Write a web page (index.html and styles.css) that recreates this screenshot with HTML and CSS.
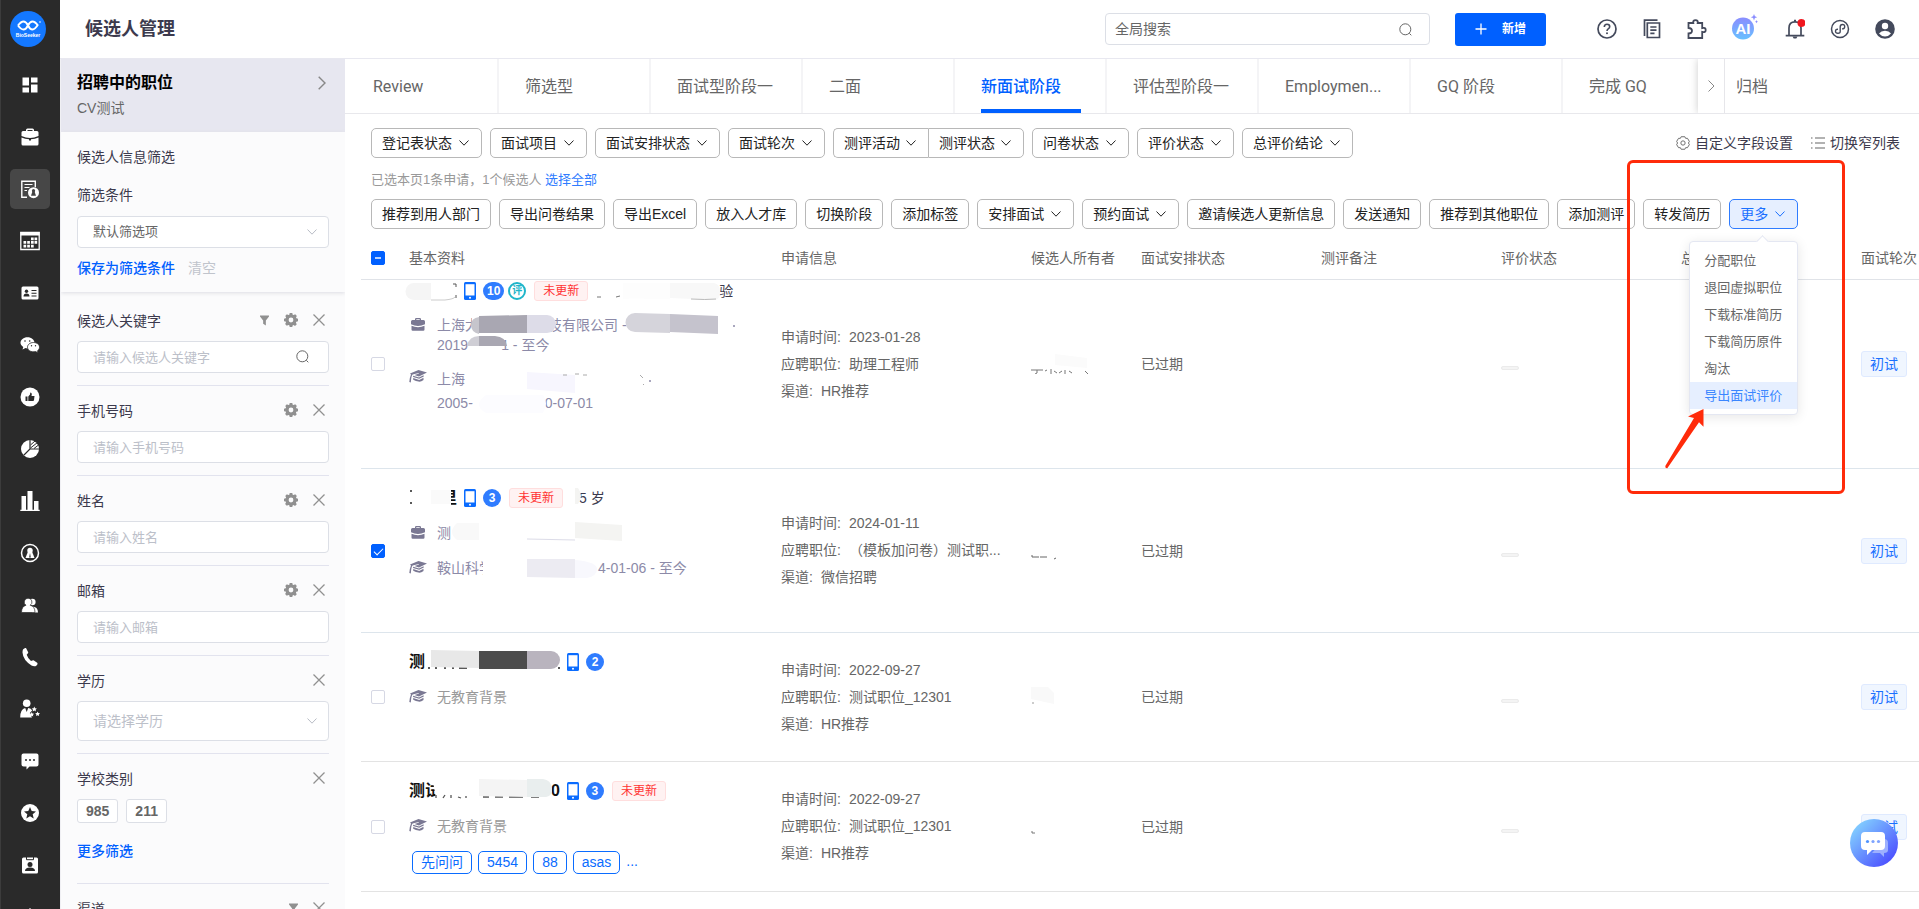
FILE: index.html
```html
<!DOCTYPE html>
<html lang="zh-CN">
<head>
<meta charset="utf-8">
<title>候选人管理</title>
<link rel="stylesheet" href="styles.css">
</head>
<body>
<svg class="defs" aria-hidden="true">
  <symbol id="down" viewBox="0 0 10 6"><path d="M.5.5 5 5.2 9.5.5" fill="none" stroke="currentColor"/></symbol>
  <symbol id="close" viewBox="0 0 12 12"><path d="m.5.5 11 11m0-11-11 11" fill="none" stroke="currentColor" stroke-width="1.3"/></symbol>
  <symbol id="gear" viewBox="0 0 14 14"><path fill="currentColor" fill-rule="evenodd" d="M5.7 0h2.6l.4 1.7 1 .4L11.200 1.200 12.900 2.900 12 4.300l.4 1 1.600.4v2.600l-1.700.4-.4 1 .9 1.500-1.800 1.700-1.400-.9-1 .4L8.300 14H5.700l-.4-1.700-1-.4-1.500.9-1.700-1.700.9-1.500-.4-1L0 8.300V5.700l1.700-.4.4-1-.9-1.400 1.700-1.700 1.400.9 1-.4zM7 4.600a2.400 2.400 0 1 0 0 4.800 2.400 2.400 0 0 0 0-4.800z"/></symbol>
  <symbol id="funnel" viewBox="0 0 10 11"><path fill="currentColor" d="M0 0h10v1L6.500 5.500V11L3.500 9V5.500L0 1z"/></symbol>
  <symbol id="search" viewBox="0 0 13 13"><circle cx="6.300" cy="6.300" r="5.500" fill="none" stroke="currentColor"/><path d="m10.300 10.300 2 2" stroke="currentColor"/></symbol>
  <symbol id="phone" viewBox="0 0 12 18"><rect width="12" height="18" rx="1.500" fill="#0a6cff"/><path fill="#fff" d="M1.500 2.200h9v11.300h-9z"/><circle cx="6" cy="15.700" r="1" fill="#fff"/></symbol>
  <symbol id="bag" viewBox="0 0 14 13"><path fill="currentColor" d="M4 2V1.200Q4 0 5.200 0h3.600Q10 0 10 1.200V2h2.500Q14 2 14 3.500v2.700Q10.500 8 7 8T0 6.200V3.500Q0 2 1.500 2zm1.300 0h3.400v-.8H5.300zM.5 7.800Q3.500 9.200 7 9.200t6.500-1.400V11.500q0 1.200-1.200 1.200H1.700Q.5 12.700.5 11.500z"/></symbol>
  <symbol id="cap" viewBox="0 0 18 13"><path fill="currentColor" d="M1 3.500 9.500 0 18 2.500 10 6.500 5.500 5 10 3.400 9.700 2.900 3.600 4.600Q2.200 6 1.800 12.500L.3 12Q.8 7 2 4.500zM4.200 5.700 10 7.600l4.500-2.300.3 1.200-4.600 2.300L4 7zM4.200 8l6 1.900 4.300-2.100v2.300Q12 12 9.500 11.600T4.200 9.700z"/></symbol>
  <linearGradient id="aiFill" x1="0" y1="0" x2="0" y2="1"><stop offset="0" stop-color="#8a8dff"/><stop offset="1" stop-color="#68c0ff"/></linearGradient>
  <linearGradient id="chatFill" x1="0" y1="0" x2="1" y2="1"><stop offset=".1" stop-color="#84d2ff"/><stop offset=".9" stop-color="#4a4cff"/></linearGradient>
</svg>

<div class="app">
  <nav class="rail" aria-label="主导航">
    <svg class="logo" viewBox="0 0 36 36"><circle cx="18" cy="18" r="18" fill="#1478ff"/><path d="M8 14.500Q11 10.500 13.500 10.500T18 14.500 22.500 18.500 28 13.500M8 14.500Q11 18.500 13.500 18.500T18 14.500 22.500 10.500 28 14.500" fill="none" stroke="#fff" stroke-width="1.900"/><circle cx="30" cy="11" r=".8" fill="#fff"/><text x="18" y="26" text-anchor="middle" class="logo-text">BioSeeker</text></svg>
    <a href="#" aria-label="概览"><svg viewBox="0 0 20 20" fill="#fff"><path d="M2.500 2.500h6.500v8H2.500zM2.500 12.500h6.500v5H2.500zM11 2.500h6.500v5H11zM11 9.500h6.500v8H11z"/></svg></a>
    <a href="#" aria-label="职位"><svg viewBox="0 0 20 20" fill="#fff"><path d="M6 4V3q0-1.500 1.500-1.500h5Q14 1.500 14 3v1h3q1.500 0 1.500 1.500V9Q14 11 10 11T1.500 9V5.500Q1.500 4 3 4zm1.500 0h5V3h-5zM1.500 10.500Q5 12 9 12.300v1.200h2v-1.200q4-.3 7.500-1.800V17q0 1.500-1.500 1.500H3Q1.500 18.500 1.500 17z"/></svg></a>
    <a href="#" class="on" aria-label="候选人"><svg viewBox="0 0 20 20"><path d="M7 18.200H1.800V2.300h13.500v6" fill="none" stroke="#fff" stroke-width="1.400"/><path d="M4.500 5.500h8M4.500 8.500h5M4.500 11.500h2.500" stroke="#fff" stroke-width="1.200"/><circle cx="13.500" cy="13.700" r="5.500" fill="#fff"/><circle cx="13.500" cy="11.700" r="1.600" fill="#444"/><path d="M12.600 12h1.800l1.600 4.700h-5z" fill="#444"/></svg></a>
    <a href="#" aria-label="日历"><svg viewBox="0 0 20 20"><path d="M.8 1.500h18.400v17H.8z" fill="none" stroke="#fff" stroke-width="1.300"/><path d="M.5 1h19v3.500H.5zM11 6.500h2.700v2.700H11zM14.500 6.500h2.700v2.700h-2.700zM3.500 10h2.700v2.700H3.500zM7.200 10h2.700v2.700H7.200zM11 10h2.700v2.700H11zM14.500 10h2.700v2.700h-2.700zM3.500 13.700h2.700v2.700H3.500zM7.200 13.700h2.700v2.700H7.200zM11 13.700h2.700v2.700H11z" fill="#fff"/></svg></a>
    <a href="#" aria-label="名片"><svg viewBox="0 0 20 20"><rect x="1.500" y="3.500" width="17" height="13" rx="1.500" fill="#fff"/><circle cx="6.500" cy="8.200" r="1.700" fill="#2a2a2a"/><path d="M3.500 13.500q0-3 3-3t3 3zM11.500 7h5v1h-5zM11.500 9.700h5v1h-5zM11.500 12.400h5v1h-5z" fill="#2a2a2a"/></svg></a>
    <a href="#" aria-label="微信"><svg viewBox="0 0 20 20"><path d="M7.500 2.200c4 0 7 2.500 7 5.600s-3 5.600-7 5.600L5.500 13l-3 1.500.8-2.500C1.500 11 .5 9.500.5 7.800c0-3.100 3-5.600 7-5.600z" fill="#fff"/><path d="M13.500 7.500c3.500 0 6 2.100 6 4.700 0 1.500-.7 2.700-2 3.600l.7 2.200-2.500-1.400c-5 1-8.200-1.500-8.200-4.400 0-2.600 2.500-4.700 6-4.700z" fill="#fff" stroke="#2a2a2a" stroke-width=".8"/><g fill="#2a2a2a"><circle cx="5" cy="6" r=".8"/><circle cx="9.700" cy="6" r=".8"/><circle cx="11.500" cy="10.700" r=".7"/><circle cx="15.500" cy="10.700" r=".7"/></g></svg></a>
    <a href="#" aria-label="推荐"><svg viewBox="0 0 20 20"><circle cx="10" cy="10" r="9.500" fill="#fff"/><path d="M5.500 9.500h2V14h-2zM8.300 14V9.500L10 7.500 10.300 5.500q1.500 0 1.500 1.700L11.500 9h3L14 13.200q-.2.800-1 .8z" fill="#2a2a2a"/></svg></a>
    <a href="#" aria-label="分析"><svg viewBox="0 0 20 20"><circle cx="10" cy="10" r="9" fill="#fff"/><path d="M10 1v9L3.500 16.500M10 10h9" fill="none" stroke="#2a2a2a" stroke-width="1.200"/><path d="M10.500 6 15 2M10.500 9 17.500 3.500M14 9.500l4.500-3.500" stroke="#2a2a2a" stroke-width="1"/></svg></a>
    <a href="#" aria-label="报表"><svg viewBox="0 0 20 20" fill="#fff"><path d="M1.500 5h4.500v14H1.500zM7.500 0h5v19h-5zM14 10h4.500v9H14zM.3 18.800h19.400V20H.3z"/></svg></a>
    <a href="#" aria-label="人才"><svg viewBox="0 0 20 20"><circle cx="10" cy="10" r="8.500" fill="none" stroke="#fff" stroke-width="1.500"/><circle cx="10" cy="7.500" r="2.700" fill="#fff"/><path d="M8 8.500h4L14.500 15h-9z" fill="#fff"/><path d="m10 10 .8 4.500H9.200z" fill="#2a2a2a"/></svg></a>
    <a href="#" aria-label="团队"><svg viewBox="0 0 20 20" fill="#fff"><circle cx="12.300" cy="7" r="3.300"/><path d="M11 11.500q7-.5 7 6h-6z"/><path d="M8 3.200a3.800 3.800 0 0 1 2.200 7q4.800 1.200 4.800 7.300H1.500q0-6.100 4.500-7.300a3.800 3.800 0 0 1 2-7z" stroke="#2a2a2a" stroke-width=".7"/></svg></a>
    <a href="#" aria-label="电话"><svg viewBox="0 0 20 20" fill="#fff"><path d="M3 2.500Q4.500.5 6 1L8.300 5.500Q8 6.500 6.700 7.700q1.300 4 4.300 6.300 1.500-.8 2.500-.8l4 2.800q.5 1.500-1.500 3-2 .8-4.500-.5Q3 13 2.500 5.500 2.500 3.500 3 2.500z"/></svg></a>
    <a href="#" aria-label="面试官"><svg viewBox="0 0 20 20" fill="#fff"><circle cx="6.700" cy="4.300" r="3.800"/><path d="M.2 18.500q0-8.500 5-9.500l1.500 4 1.500-4q3 .4 4 2.600L9.800 14l2.200 4.500z"/><path d="m14.300 7.500.8 1.700 1.800.2-1.300 1.300.3 1.800-1.600-.9-1.600.9.300-1.800-1.300-1.300 1.800-.2zM11.700 13l.7 1.500 1.700.2-1.200 1.200.3 1.700-1.500-.8-1.500.8.300-1.700-1.200-1.200 1.700-.2zM17.600 12.500l.7 1.500 1.700.2-1.200 1.200.3 1.700-1.500-.8-1.500.8.300-1.700-1.200-1.200 1.700-.2z"/></svg></a>
    <a href="#" aria-label="消息"><svg viewBox="0 0 20 20"><path d="M3.500 2.500h13q2 0 2 2v9q0 2-2 2H9.500l-3 3v-3h-3q-2 0-2-2v-9q0-2 2-2z" fill="#fff"/><g fill="#2a2a2a"><circle cx="6" cy="9" r="1"/><circle cx="10" cy="9" r="1"/><circle cx="14" cy="9" r="1"/></g></svg></a>
    <a href="#" aria-label="收藏"><svg viewBox="0 0 20 20"><circle cx="10" cy="10" r="9" fill="#fff"/><path d="m10 4 1.700 4 4.300.4-3.300 2.800 1 4.300L10 13.200l-3.700 2.300 1-4.300L4 8.400 8.300 8z" fill="#2a2a2a"/></svg></a>
    <a href="#" aria-label="档案"><svg viewBox="0 0 20 20"><rect x="2" y="2.500" width="16" height="16" rx="1.500" fill="#fff"/><path d="M6.500 2h7v2.700h-7z" fill="#fff" stroke="#2a2a2a"/><circle cx="10" cy="9.500" r="2.500" fill="#2a2a2a"/><path d="M5 16q0-3.500 5-3.500t5 3.500z" fill="#2a2a2a"/></svg></a>
    <a href="#" aria-label="设置"><svg viewBox="0 0 20 20" fill="#fff"><path d="m10 1 9 9-9 9-9-9z"/></svg></a>
  </nav>

  <div class="page">
    <header class="top">
      <h1>候选人管理</h1>
      <label class="global-search"><input type="search" placeholder="全局搜索" aria-label="全局搜索"><svg width="13" height="13"><use href="#search"/></svg></label>
      <button class="primary" type="button"><svg width="12" height="12" viewBox="0 0 12 12"><path d="M6 .5v11M.5 6h11" stroke="#fff" stroke-width="1.300"/></svg>新增</button>
      <div class="top-icons">
        <button type="button" aria-label="帮助"><svg viewBox="0 0 20 20"><circle cx="10" cy="10" r="9" fill="none" stroke="#444a5c" stroke-width="1.700"/><path d="M7.300 8Q7.300 5.300 10 5.300T12.700 7.800Q12.700 9 11.200 9.900 10 10.700 10 12" fill="none" stroke="#444a5c" stroke-width="1.600"/><circle cx="10" cy="14.300" r="1" fill="#444a5c"/></svg></button>
        <button type="button" aria-label="文档"><svg viewBox="0 0 20 20" fill="none" stroke="#444a5c" stroke-width="1.700"><path d="M5.300 4h12.200v14.500H5.300zM2.500 17V1.200h13M8.300 8h6.200M8.300 11.200h6.200M8.300 14.400h4.200"/></svg></button>
        <button type="button" aria-label="插件"><svg viewBox="0 0 20 20" fill="none" stroke="#444a5c" stroke-width="1.800"><path d="M1.500 4h4.800q-.6-2.800 2.200-2.800T10.700 4h4.500v5q3.500-.8 3.500 2t-3.500 2v6H1.500v-4.500q3.500 0 3.500-2.700T1.500 9z"/></svg></button>
        <button type="button" class="ai" aria-label="AI"><svg viewBox="0 0 26 26"><circle cx="11" cy="14.500" r="11" fill="url(#aiFill)"/><text x="11" y="20" text-anchor="middle" class="ai-text">AI</text><path d="m22 0 .9 2.300 2.300.9-2.300.9L22 6.400l-.9-2.300-2.300-.9 2.300-.9zM24.500 6l.5 1.200 1 .5-1 .5-.5 1-.5-1-1-.5 1-.5z" fill="#8a8dff"/></svg></button>
        <button type="button" class="bell" aria-label="通知"><svg viewBox="0 0 20 20"><path d="M4 16.500V9Q4 2.800 10 2.800T16 9v7.500M.7 16.700h18.600" fill="none" stroke="#444a5c" stroke-width="1.700"/><path d="M9 .8h2v2H9zM7.500 17.500h5L11.300 19.500H8.700z" fill="#444a5c"/><circle cx="16.500" cy="4" r="4" fill="#f0161e"/></svg></button>
        <button type="button" aria-label="小程序"><svg viewBox="0 0 20 20" fill="none" stroke="#444a5c" stroke-width="1.500"><circle cx="10" cy="10" r="8.500"/><path d="M8 10.200Q5.500 10 5.500 12.200T8 14.300 10.200 12V8Q10.200 5.500 12.500 5.500T14.700 7.700 12 9.900" stroke-width="1.400"/></svg></button>
        <button type="button" aria-label="账户"><svg viewBox="0 0 20 20"><circle cx="10" cy="10" r="9.800" fill="#444a5c"/><circle cx="10" cy="7" r="3.200" fill="#fff"/><path d="M4 14.500Q6 11.800 10 11.800t6 2.700Q13.500 17.500 10 17.500T4 14.500z" fill="#fff"/></svg></button>
      </div>
    </header>

    <div class="body">
      <aside class="side">
        <a class="job" href="#">
          <span><strong>招聘中的职位</strong><small>CV测试</small></span>
          <svg width="8" height="14" viewBox="0 0 8 14"><path d="m.7.700 6.300 6.300-6.300 6.300" fill="none" stroke="#888" stroke-width="1.400"/></svg>
        </a>
        <div class="conditions">
          <h2>候选人信息筛选</h2>
          <label for="preset">筛选条件</label>
          <div class="pick"><select id="preset"><option>默认筛选项</option></select><svg width="10" height="6"><use href="#down"/></svg></div>
          <div class="links"><a href="#">保存为筛选条件</a><a class="muted" href="#">清空</a></div>
        </div>
        <form class="fields">
          <section><div class="field-head"><label for="kw">候选人关键字</label><svg width="9" height="11"><use href="#funnel"/></svg><svg width="14" height="14"><use href="#gear"/></svg><svg width="12" height="12"><use href="#close"/></svg></div>
            <div class="pick find"><input id="kw" type="text" placeholder="请输入候选人关键字"><svg width="13" height="13"><use href="#search"/></svg></div></section>
          <section><div class="field-head"><label for="mobile">手机号码</label><svg width="14" height="14"><use href="#gear"/></svg><svg width="12" height="12"><use href="#close"/></svg></div>
            <input id="mobile" type="text" placeholder="请输入手机号码"></section>
          <section><div class="field-head"><label for="name">姓名</label><svg width="14" height="14"><use href="#gear"/></svg><svg width="12" height="12"><use href="#close"/></svg></div>
            <input id="name" type="text" placeholder="请输入姓名"></section>
          <section><div class="field-head"><label for="mail">邮箱</label><svg width="14" height="14"><use href="#gear"/></svg><svg width="12" height="12"><use href="#close"/></svg></div>
            <input id="mail" type="text" placeholder="请输入邮箱"></section>
          <section><div class="field-head"><label for="degree">学历</label><svg width="12" height="12"><use href="#close"/></svg></div>
            <div class="pick"><select id="degree" class="tall"><option>请选择学历</option></select><svg width="10" height="6"><use href="#down"/></svg></div></section>
          <section><div class="field-head"><span>学校类别</span><svg width="12" height="12"><use href="#close"/></svg></div>
            <div class="chips"><button type="button">985</button><button type="button">211</button></div>
            <a class="more-filters" href="#">更多筛选</a></section>
          <section><div class="field-head"><span>渠道</span><svg width="9" height="11"><use href="#funnel"/></svg><svg width="12" height="12"><use href="#close"/></svg></div></section>
        </form>
      </aside>

      <main class="main">
        <nav class="tabs">
          <a href="#">Review</a><a href="#">筛选型</a><a href="#">面试型阶段一</a><a href="#">二面</a><a href="#" class="on"><span>新面试阶段</span></a><a href="#">评估型阶段一</a><a href="#">Employmen...</a><a href="#">GQ 阶段</a><a href="#">完成 GQ</a>
          <div class="tabs-end"><button type="button" aria-label="更多阶段"><svg width="7" height="12" viewBox="0 0 7 12"><path d="M.5.500 6 6 .5 11.500" fill="none" stroke="#888"/></svg></button><a href="#">归档</a></div>
        </nav>

        <div class="tools">
          <div class="row">
            <button type="button">登记表状态<svg width="10" height="6"><use href="#down"/></svg></button>
            <button type="button">面试项目<svg width="10" height="6"><use href="#down"/></svg></button>
            <button type="button">面试安排状态<svg width="10" height="6"><use href="#down"/></svg></button>
            <button type="button">面试轮次<svg width="10" height="6"><use href="#down"/></svg></button>
            <div class="joined"><button type="button">测评活动<svg width="10" height="6"><use href="#down"/></svg></button><button type="button">测评状态<svg width="10" height="6"><use href="#down"/></svg></button></div>
            <button type="button">问卷状态<svg width="10" height="6"><use href="#down"/></svg></button>
            <button type="button">评价状态<svg width="10" height="6"><use href="#down"/></svg></button>
            <button type="button">总评价结论<svg width="10" height="6"><use href="#down"/></svg></button>
            <div class="view-links">
              <a href="#"><svg width="14" height="14" viewBox="0 0 15 15" fill="none" stroke="#666"><path d="M5.500.800h4l.8 1.700h2l2 3.300-1 1.700 1 1.700-2 3.300h-2l-.8 1.700h-4l-.8-1.700h-2l-2-3.300 1-1.700-1-1.700 2-3.300h2z"/><circle cx="7.500" cy="7.500" r="2.300"/></svg>自定义字段设置</a>
              <a href="#"><svg width="14" height="12" viewBox="0 0 14 12" stroke="#666" stroke-width="1.200"><path d="M4 1h10M4 6h10M4 11h10M0 1h1.500M0 6h1.500M0 11h1.500"/></svg>切换窄列表</a>
            </div>
          </div>
          <p class="picked">已选本页1条申请，1个候选人 <a href="#">选择全部</a></p>
          <div class="row">
            <button type="button">推荐到用人部门</button>
            <button type="button">导出问卷结果</button>
            <button type="button">导出Excel</button>
            <button type="button">放入人才库</button>
            <button type="button">切换阶段</button>
            <button type="button">添加标签</button>
            <button type="button">安排面试<svg width="10" height="6"><use href="#down"/></svg></button>
            <button type="button">预约面试<svg width="10" height="6"><use href="#down"/></svg></button>
            <button type="button">邀请候选人更新信息</button>
            <button type="button">发送通知</button>
            <button type="button">推荐到其他职位</button>
            <button type="button">添加测评</button>
            <button type="button">转发简历</button>
            <div class="more">
              <button type="button" class="active">更多<svg width="10" height="6"><use href="#down"/></svg></button>
              <div class="menu">
                <a href="#">分配职位</a><a href="#">退回虚拟职位</a><a href="#">下载标准简历</a><a href="#">下载简历原件</a><a href="#">淘汰</a><a href="#" class="on">导出面试评价</a>
              </div>
              <div class="callout"><svg viewBox="0 0 39 60"><path d="M38.500 0 23 7.500l6 1.500L.3 57q-.3 2.500 2 2.300L34 13.300l4.500 4.500z" fill="#ff2b0a"/></svg></div>
            </div>
          </div>
        </div>

        <div class="list">
          <table>
            <colgroup><col class="c-check"><col class="c-profile"><col class="c-apply"><col class="c-owner"><col class="c-std"><col class="c-std"><col class="c-std"><col class="c-std"><col class="c-last"></colgroup>
            <thead><tr><th><input type="checkbox" class="part" aria-label="全选"></th><th class="profile">基本资料</th><th>申请信息</th><th>候选人所有者</th><th>面试安排状态</th><th>测评备注</th><th>评价状态</th><th>总评价结论</th><th>面试轮次</th></tr></thead>
            <tbody>
              <tr class="r1">
                <td><input type="checkbox" aria-label="选择候选人 1"></td>
                <td class="profile">
                  <div class="name"><i class="hid w-short"></i><svg width="12" height="18"><use href="#phone"/></svg><b class="count">10</b><span class="rated">评</span><em class="stale">未更新</em><i class="hid w-years"></i><span>验</span></div>
                  <div class="line"><svg width="14" height="13"><use href="#bag"/></svg><span>上海大<i class="hid w-firm"></i>技有限公司 -<br>2019<i class="hid w-date"></i>1 - 至今</span></div>
                  <div class="line school"><svg width="18" height="13"><use href="#cap"/></svg><span>上海<br>2005-<i class="hid w-span"></i>0-07-01</span></div>
                  <svg class="smudge" width="380" height="189">
                    <path d="M23 3h17v17H23a8 8 0 0 1 0-17z" fill="#f5f5f5"/><path d="M40 20h14q9-1 10-3" fill="none" stroke="#ccc"/><path d="M62 4h3v3M65 15v3" fill="none" stroke="#555"/>
                    <path d="M206 17h4M225 17l4-1" stroke="#777"/><path d="M232 3h47v16q-47-1-47 0z" fill="#fdfdfd"/><path d="M279 3h44q6 1 6 9 0 7-5 8l-45-2z" fill="#f8f8f8"/><path d="M300 19q15 1 25 0" fill="none" stroke="#bbb"/>
                    <path d="M81 34h7v20h-7z" fill="#fff"/><path d="M88 37v17q-8-2-8-9t8-8z" fill="#c6c5cc"/><path d="M88 36l48-1v18H88z" fill="#a9a7b2"/><path d="M136 35h20a9 9 0 0 1 0 18h-20z" fill="#dddce8"/>
                    <path d="M244 33l35 1v19l-35-1a9 9 0 0 1 0-19z" fill="#d5d4db"/><path d="m279 34 48 2v18l-48-2z" fill="#c5c3cd"/><circle cx="343" cy="46" r="1" fill="#8c8aa8"/>
                    <path d="M88 56q-10 0-12 10h12z" fill="#cfced5"/><path d="M88 56h16q11 1 12 10H88z" fill="#a9a7b2"/>
                    <path d="m136 92 48 3v18l-48-4z" fill="#f7f6fe"/><path d="M172 95h4M184 94h4M192 95h4M249 95l3 3M252 105l1-1" stroke="#aaa"/><circle cx="259" cy="101" r="1" fill="#8c8aa8"/>
                    <path d="M95 115h57q6 8 0 18H95q-14-8 0-18z" fill="#fcfcff"/>
                  </svg>
                </td>
                <td><p><span>申请时间:</span>2023-01-28</p><p><span>应聘职位:</span>助理工程师</p><p><span>渠道:</span>HR推荐</p></td>
                <td><svg class="scrap" width="68" height="20" viewBox="0 0 68 20"><path d="m24 0 32 4v10l-32-3z" fill="#fbfbfb"/><path d="M0 16h12M6 16v3l-2 1M14 17l2-1M20 15v5M23 17l3 2M28 19l3-2M34 16v4M38 17l3 2M54 17l3 3" fill="none" stroke="#777"/></svg></td>
                <td>已过期</td><td></td><td><i class="dash"></i></td><td></td><td><a class="round" href="#">初试</a></td>
              </tr>
              <tr class="r2">
                <td><input type="checkbox" checked aria-label="选择候选人 2"></td>
                <td class="profile">
                  <div class="name"><i class="hid w-first"></i><strong>里</strong><svg width="12" height="18"><use href="#phone"/></svg><b class="count">3</b><em class="stale">未更新</em><i class="hid w-age"></i><span>5 岁</span></div>
                  <div class="line"><svg width="14" height="13"><use href="#bag"/></svg><span>测</span></div>
                  <div class="line"><svg width="18" height="13"><use href="#cap"/></svg><span>鞍山科学<i class="hid w-school"></i>4-01-06 - 至今</span></div>
                  <svg class="smudge" width="380" height="164">
                    <path d="M18 20h42v18H18z" fill="#fff"/><path d="M40 21h20v14H40z" fill="#fafafa"/><path d="M19 22h2M19 34h2" stroke="#222" stroke-width="1.500"/>
                    <path d="M184 19h3q6 8 0 16h-3z" fill="#f4f4f2"/>
                    <path d="M66 54h22v17H66q-10-8 0-17z" fill="#f9f9f9"/><path d="m136 70 48 1" stroke="#dcdce8"/><path d="m184 53 47 3v16l-47-3z" fill="#f4f4f2"/>
                    <path d="M92 89h44v20H92z" fill="#fff"/><path d="M136 90h48v19l-48-1z" fill="#ecebf2"/><path d="M184 91q22 2 22 9t-10 9h-12z" fill="#f8f8fd"/>
                  </svg>
                </td>
                <td><p><span>申请时间:</span>2024-01-11</p><p><span>应聘职位:</span>（模板加问卷）测试职...</p><p><span>渠道:</span>微信招聘</p></td>
                <td><svg class="scrap" width="68" height="20" viewBox="0 0 68 20"><path d="M1 14v2h7M9 16h7M23 18l2-1" fill="none" stroke="#666"/></svg></td>
                <td>已过期</td><td></td><td><i class="dash"></i></td><td></td><td><a class="round" href="#">初试</a></td>
              </tr>
              <tr class="r3">
                <td><input type="checkbox" aria-label="选择候选人 3"></td>
                <td class="profile">
                  <div class="name"><strong>测</strong><i class="hid w-long"></i><svg width="12" height="18"><use href="#phone"/></svg><b class="count">2</b></div>
                  <div class="line none"><svg width="18" height="13"><use href="#cap"/></svg><span>无教育背景</span></div>
                  <svg class="smudge" width="380" height="129">
                    <path d="M38 34v2M45 34v2M54 33v3M62 34v2M68 35h8M167 35h2" stroke="#222" stroke-width="1.500"/>
                    <path d="m40 17 48 1v17l-48-1z" fill="#e8e8e8"/><path d="M88 18h48v18H88z" fill="#4d4d4d"/><path d="M136 18h24a9 9 0 0 1 0 18h-24z" fill="#b9b4be"/>
                  </svg>
                </td>
                <td><p><span>申请时间:</span>2022-09-27</p><p><span>应聘职位:</span>测试职位_12301</p><p><span>渠道:</span>HR推荐</p></td>
                <td><svg class="scrap" width="68" height="20" viewBox="0 0 68 20"><path d="M0 0h17l6 6v11L0 12z" fill="#f9f9f9"/><path d="M1 16h2" stroke="#999"/></svg></td>
                <td>已过期</td><td></td><td><i class="dash"></i></td><td></td><td><a class="round" href="#">初试</a></td>
              </tr>
              <tr class="r4">
                <td><input type="checkbox" aria-label="选择候选人 4"></td>
                <td class="profile">
                  <div class="name"><strong>测试</strong><i class="hid w-mid"></i><strong>0</strong><svg width="12" height="18"><use href="#phone"/></svg><b class="count">3</b><em class="stale">未更新</em></div>
                  <div class="line none"><svg width="18" height="13"><use href="#cap"/></svg><span>无教育背景</span></div>
                  <div class="labels"><a href="#">先问问</a><a href="#">5454</a><a href="#">88</a><a href="#">asas</a><span>...</span></div>
                  <svg class="smudge" width="380" height="130">
                    <path d="M42 20h12v16H45z" fill="#fff"/><path d="M45 33v3M54 33l-2 3M60 33v3M67 35l3 1M75 34v2M92 35h6M104 35h8M118 35h14M140 35h8" stroke="#555" stroke-width="1.300"/>
                    <path d="m88 17 48 1v17l-48-1z" fill="#f4f4f4"/><path d="M136 17h16q8 1 9 9t-6 9h-19z" fill="#e9eeee"/>
                  </svg>
                </td>
                <td><p><span>申请时间:</span>2022-09-27</p><p><span>应聘职位:</span>测试职位_12301</p><p><span>渠道:</span>HR推荐</p></td>
                <td><svg class="scrap" width="68" height="20" viewBox="0 0 68 20"><path d="M1 14v2h3" fill="none" stroke="#777"/></svg></td>
                <td>已过期</td><td></td><td><i class="dash"></i></td><td></td><td><a class="round" href="#">初试</a></td>
              </tr>
            </tbody>
          </table>
        </div>
      </main>
    </div>
  </div>
  <button class="chat" type="button" aria-label="在线客服"><svg viewBox="0 0 48 48"><circle cx="24" cy="24" r="24" fill="url(#chatFill)"/><path d="M34 20q4 0 4 4v7q0 3-4 3v4l-4-4h-8z" fill="#9db0ff"/><path d="M15 13h16q4 0 4 4v10q0 4-4 4h-9l-5 5v-5h-2q-4 0-4-4V17q0-4 4-4z" fill="#fff"/><circle cx="17.500" cy="22.500" r="1.600" fill="#4f93ff"/><circle cx="23" cy="22.500" r="1.600" fill="#7fa4ff"/><circle cx="28.500" cy="22.500" r="1.600" fill="#7fa4ff"/></svg></button>
</div>
</body>
</html>
```
FILE: styles.css
```css
* { box-sizing: border-box; }
body { margin: 0; font: 14px/20px "Liberation Sans", "Noto Sans CJK SC", sans-serif; color: #666; background: #fff; overflow: hidden; }
a { color: inherit; text-decoration: none; }
button, input, select { font: inherit; color: inherit; margin: 0; }
button { padding: 0; border: 0; background: none; }
h1, h2, p { margin: 0; font-weight: 400; }
svg { flex: none; display: block; }
.defs { position: absolute; width: 0; height: 0; }

.app { display: flex; height: 100vh; overflow: hidden; }
.rail { flex: none; width: 60px; padding: 11px 0 0 9px; display: flex; flex-direction: column; gap: 12px; background: #2a2a2a; border-left: 1px solid #3c3c3c; overflow: hidden; }
.logo { width: 36px; height: 36px; margin-bottom: 6px; }
.logo-text { font: bold 5px "Liberation Sans", sans-serif; fill: #fff; }
.rail a { flex: none; width: 40px; height: 40px; display: grid; place-items: center; border-radius: 5px; }
.rail a svg { width: 20px; height: 20px; }
.rail a.on { background: #474747; }

.page { flex: 1; min-width: 0; display: flex; flex-direction: column; }
.top { flex: none; height: 59px; padding: 0 24px 0 25px; display: flex; align-items: center; border-bottom: 1px solid #e8e8f0; }
.top h1 { font-size: 18px; font-weight: 700; color: #3c3a4d; margin-right: auto; }
.global-search { width: 325px; height: 32px; display: flex; align-items: center; padding: 0 17px 0 9px; border: 1px solid #dcdfe6; border-radius: 4px; }
.global-search input { flex: 1; min-width: 0; padding: 0; border: 0; outline: 0; appearance: none; background: none; }
.global-search input::placeholder { color: #666; opacity: 1; }
.primary { width: 91px; height: 33px; margin: 0 51px 0 25px; display: flex; align-items: center; justify-content: center; gap: 15px; border-radius: 3px; background: #0060ff; color: #fff; font-size: 12px; font-weight: 700; }
.top-icons { display: flex; align-items: center; gap: 25px; }
.top-icons svg { width: 20px; height: 20px; }
.top-icons .ai svg { width: 26px; height: 26px; }
.top-icons .ai { margin: 0 2px 4px 0; }
.ai-text { font: bold 15px "Liberation Sans", sans-serif; fill: #fff; }

.body { flex: 1; min-height: 0; display: flex; }
.side { flex: none; width: 285px; border-left: 1px solid #f0f0f4; background: #fbfbfc; color: #3c3a4d; overflow: hidden; }
.job { display: flex; justify-content: space-between; height: 73px; padding: 14px 19px 0 16px; background: #e7e7f0; }
.job strong, .job small { display: block; }
.job strong { font-size: 16px; color: #000; }
.job small { margin-top: 5px; font-size: 14px; color: #666; }
.job svg { margin-top: 3px; }
.conditions { padding: 15px 16px 14px; box-shadow: 0 1px 4px #dcdce2; }
.conditions h2 { font-size: 14px; margin-bottom: 18px; }
.conditions label { display: block; margin-bottom: 11px; }
.pick { position: relative; color: #666; }
.pick svg { position: absolute; right: 12px; top: 50%; margin-top: -3px; color: #b8bcc5; }
.find svg { right: 20px; margin-top: -7px; color: #666; }
.side input, .side select { display: block; width: 100%; height: 32px; padding: 0 15px; border: 1px solid #dcdfe6; border-radius: 4px; background: #fff; font-size: 13px; outline: 0; appearance: none; }
.side input::placeholder { color: #bcc0c9; opacity: 1; }
.side select.tall { height: 40px; font-size: 14px; color: #bcc0c9; }
.links { display: flex; gap: 13px; margin-top: 10px; color: #0060ff; font-weight: 500; }
.links .muted { color: #c0c4cc; font-weight: 400; }
.fields { padding: 4px 16px 0; }
.fields section { padding: 15px 0 12px; border-bottom: 1px solid #e2e3ee; }
.field-head { display: flex; align-items: center; gap: 15px; height: 20px; margin-bottom: 10px; padding-right: 4px; color: #909090; }
.field-head > :first-child { margin-right: auto; color: #3c3a4d; }
.field-head svg { margin-bottom: 2px; }
.chips { display: flex; gap: 8px; }
.chips button { height: 24px; padding: 0 8px; border: 1px solid #dcdfe6; border-radius: 3px; background: #fff; color: #666; font-weight: 700; }
.more-filters { display: block; margin: 18px 0 10px; color: #0060ff; font-weight: 500; }

.main { flex: 1; min-width: 0; overflow: hidden; }
.tabs { position: relative; display: flex; height: 55px; border-bottom: 1px solid #e8e8ec; overflow: hidden; font: 16px/56px Roboto, "Noto Sans CJK SC", sans-serif; }
.tabs > a { flex: none; width: 152px; padding-left: 26px; border-left: 2px solid #f4f4f6; white-space: nowrap; }
.tabs > a:first-child { border-color: transparent; }
.tabs .on span { display: block; width: 100px; height: 54px; border-bottom: 4px solid #0060ff; color: #0060ff; font-weight: 500; }
.tabs-end { position: absolute; right: 0; top: 0; bottom: 0; width: 221px; display: flex; background: #fff; box-shadow: 0 0 8px #ccc; }
.tabs-end button { width: 27px; display: grid; place-items: center; border-right: 1px solid #e6e6ea; }
.tabs-end a { padding-left: 11px; }

.tools { padding: 14px 19px 0 26px; }
.row { display: flex; gap: 8px; }
.row button { flex: none; height: 30px; display: flex; align-items: center; gap: 7px; padding: 0 10px; border: 1px solid #b8b8b8; border-radius: 5px; background: #fff; color: #222; white-space: nowrap; }
.row button svg { margin-right: 2px; }
.joined { display: flex; }
.joined button { gap: 6px; }
.joined button:first-child { border-radius: 5px 0 0 5px; border-right: 0; }
.joined button:last-child { border-radius: 0 5px 5px 0; }
.view-links { margin-left: auto; display: flex; align-items: center; gap: 18px; color: #3c3a4d; }
.view-links a { display: flex; align-items: center; gap: 5px; white-space: nowrap; }
.picked { margin: 12px 0 9px; font-size: 13px; color: #999; }
.picked a { color: #2f7cff; }
.more { position: relative; }
.row .active { border-color: #2f7cff; background: #e6efff; color: #1a70ff; }
.menu { position: absolute; z-index: 3; right: 0; top: 42px; width: 109px; padding: 5px 0; border: 1px solid #e4e7f2; border-radius: 4px; background: #fff; box-shadow: 0 2px 12px #0000001a; font-size: 13px; }
.menu::before { content: ""; position: absolute; right: 30px; top: -5px; width: 8px; height: 8px; background: #fff; border: solid #e4e7f2; border-width: 1px 0 0 1px; transform: rotate(45deg); }
.menu a { display: block; padding-left: 14px; line-height: 27px; white-space: nowrap; }
.menu .on { background: #e6efff; color: #3a86ff; }
.callout { position: absolute; z-index: 4; left: -102px; right: -47px; top: -39px; height: 334px; border: 3px solid #ff2b0a; border-radius: 6px; pointer-events: none; }
.callout svg { position: absolute; left: 35px; top: 246px; width: 39px; height: 60px; }

.list { margin: 8px 0 0 16px; }
table { width: 100%; min-width: 1640px; table-layout: fixed; border-collapse: separate; border-spacing: 0; }
.c-check { width: 30px; }
.c-profile { width: 380px; }
.c-apply { width: 250px; }
.c-owner { width: 110px; }
.c-std { width: 180px; }
.c-last { width: 150px; }
th { height: 43px; padding: 0 0 0 10px; border-bottom: 1px solid #e0e3e8; font-weight: 400; text-align: left; }
td { padding: 0 0 0 10px; border-bottom: 1px solid #dde5ec; white-space: nowrap; }
.r3 td, .r4 td { border-color: #e3e3e3; }
.r1 { height: 189px; }
.r1 td { padding-bottom: 20px; }
.r2 { height: 164px; }
.r3 { height: 129px; }
.r4 { height: 130px; }
th.profile { padding-left: 18px; }
td.profile { position: relative; vertical-align: top; padding: 17px 0 0 18px; }
.r1 td.profile { padding-top: 0; }
td p { line-height: 27px; }
td p span { margin-right: 8px; }
input[type="checkbox"] { display: block; width: 14px; height: 14px; appearance: none; border: 1px solid #d6d8e4; border-radius: 2px; background: #fff; }
input.part { border-color: #0060ff; background: linear-gradient(#b8d2ff, #b8d2ff) center / 6px 2px no-repeat #0060ff; }
input[type="checkbox"]:checked { border-color: #0060ff; background: #0060ff; }
input[type="checkbox"]:checked::before { content: ""; display: block; width: 8px; height: 4px; margin: 3px 0 0 2px; border: solid #fff; border-width: 0 0 1px 1px; transform: rotate(-45deg); }

.name { display: flex; align-items: center; height: 24px; color: #3c3a4d; }
.r1 .name { height: 22px; }
.name strong { font-size: 16px; color: #111; }
.name > svg { margin: 0 7px; }
.hid { display: inline-block; height: 1px; }
.w-short { width: 48px; }
.w-first { width: 32px; }
.w-long { width: 135px; }
.w-mid { width: 110px; }
.w-years { width: 131px; }
.w-age { width: 16px; }
.w-firm { width: 69px; }
.w-date { width: 33px; }
.w-span { width: 72px; }
.w-school { width: 105px; }
.count { min-width: 18px; height: 18px; padding: 0 4px; border-radius: 9px; background: #2f7cff; color: #fff; font-size: 12px; line-height: 18px; text-align: center; }
.rated { width: 18px; height: 18px; margin-left: 4px; border: 2px solid #1fb5c9; border-radius: 50%; color: #1fb5c9; font-size: 10px; font-weight: 700; line-height: 14px; text-align: center; }
.stale { width: 54px; height: 20px; margin-left: 8px; border: 1px solid #ffdede; border-radius: 3px; background: #fff2f2; color: #ff3333; font-size: 12px; font-style: normal; line-height: 18px; text-align: center; }
.line { display: flex; gap: 10px; margin-top: 13px; color: #8c8aa8; }
.line + .line { margin-top: 15px; }
.line > svg { width: 18px; margin-top: 3px; color: #7a7893; }
.line.none { color: #999; }
.line + .school { margin-top: 12px; line-height: 24px; }
.labels { display: flex; gap: 6px; margin: 15px 0 0 3px; color: #0a6cff; }
.labels a { padding: 0 8px; border: 1px solid #0a6cff; border-radius: 5px; line-height: 21px; }
.smudge { position: absolute; left: 0; top: 0; pointer-events: none; }
.dash { display: block; width: 18px; height: 4px; margin-top: 8px; border: 1px solid #ebebeb; border-radius: 2px; background: #f4f4f4; }
.round { display: inline-block; width: 46px; height: 26px; border: 1px solid #dfeaff; border-radius: 3px; background: #f0f6ff; color: #1a70ff; line-height: 24px; text-align: center; }

.chat { position: absolute; z-index: 5; right: 21px; bottom: 42px; width: 48px; height: 48px; }
```
